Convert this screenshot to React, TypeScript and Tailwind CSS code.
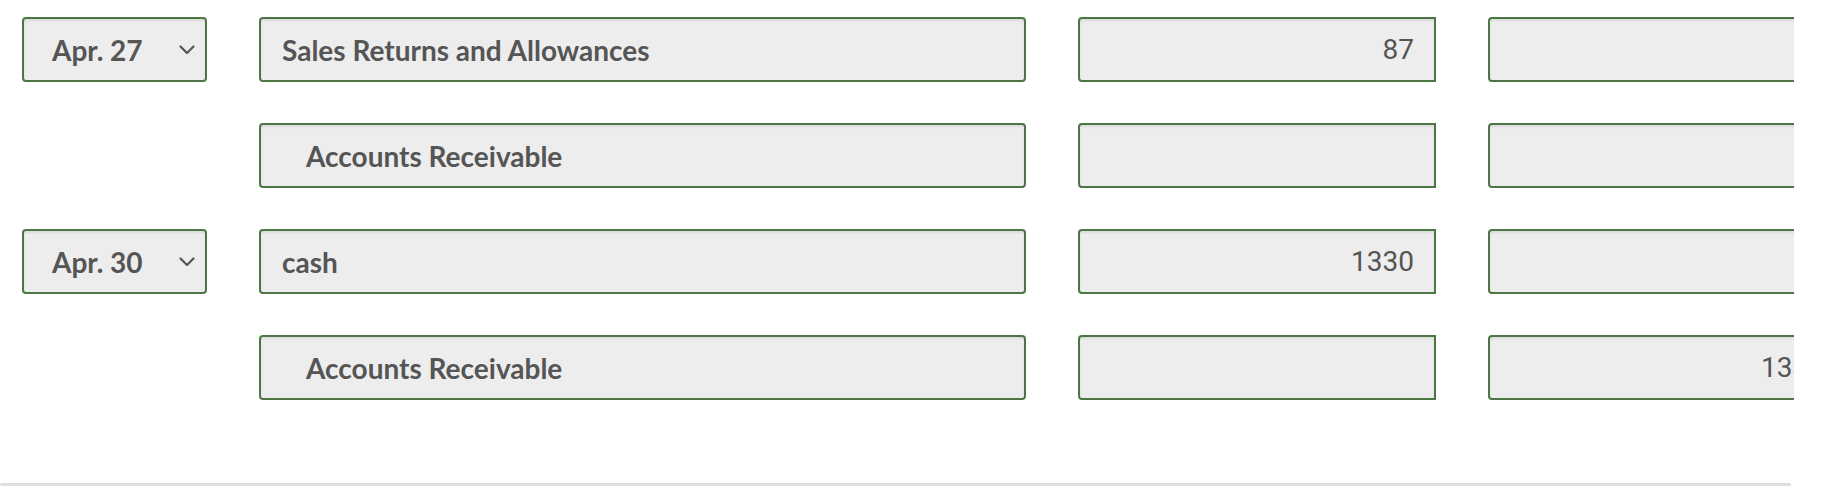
import React from "react";

const boxBase =
  "h-[65px] shrink-0 border-2 border-[#4d7645] bg-[#ededed] shadow-[inset_0_2px_2px_rgba(0,0,0,0.08)] flex items-center";

function Chevron() {
  return (
    <svg width="16" height="10" viewBox="0 0 16 10" className="shrink-0">
      <path d="M1.5 1.5 L8 8 L14.5 1.5" fill="none" stroke="#555" strokeWidth="2.2" strokeLinecap="round" strokeLinejoin="round" />
    </svg>
  );
}

type Row = { date?: string; account: string; indent?: boolean; debit?: string; credit?: string };

const rows: Row[] = [
  { date: "Apr. 27", account: "Sales Returns and Allowances", debit: "87" },
  { account: "Accounts Receivable", indent: true },
  { date: "Apr. 30", account: "cash", debit: "1330" },
  { account: "Accounts Receivable", indent: true, credit: "1330" },
];

export default function App() {
  return (
    <div className="w-[1830px] h-[486px] bg-white overflow-hidden" style={{ fontFamily: "Lato, 'Noto Sans', sans-serif" }}>
      <div className="w-[1794px] overflow-hidden pt-[17px] pl-[22px] flex flex-col gap-[41px]">
        {rows.map((r, i) => (
          <div key={i} className="flex gap-[52px] items-start">
            {r.date ? (
              <div className={`${boxBase} w-[185px] rounded-[4px] pl-[28px] pr-[10px] justify-between`}>
                <span className="text-[28px] font-bold text-[#555] leading-none">{r.date}</span>
                <Chevron />
              </div>
            ) : (
              <div className="w-[185px] shrink-0" />
            )}
            <div className={`${boxBase} w-[767px] rounded-[4px] ${r.indent ? "pl-[45px]" : "pl-[21px]"}`}>
              <span className="text-[28px] font-bold text-[#555] leading-none whitespace-nowrap">{r.account}</span>
            </div>
            <div className={`${boxBase} w-[358px] rounded-l-[4px] justify-end pr-[20px]`}>
              <span className="text-[28px] text-[#555] leading-none" style={{ fontFamily: "Roboto, 'Liberation Sans', sans-serif" }}>
                {r.debit ?? ""}
              </span>
            </div>
            <div className={`${boxBase} w-[358px] rounded-l-[4px] justify-end pr-[20px]`}>
              <span className="text-[28px] text-[#555] leading-none" style={{ fontFamily: "Roboto, 'Liberation Sans', sans-serif" }}>
                {r.credit ?? ""}
              </span>
            </div>
          </div>
        ))}
      </div>
      <div className="mt-[83px] w-[1791px] h-[3px] bg-[#dedede] rounded-[2px]" />
    </div>
  );
}
